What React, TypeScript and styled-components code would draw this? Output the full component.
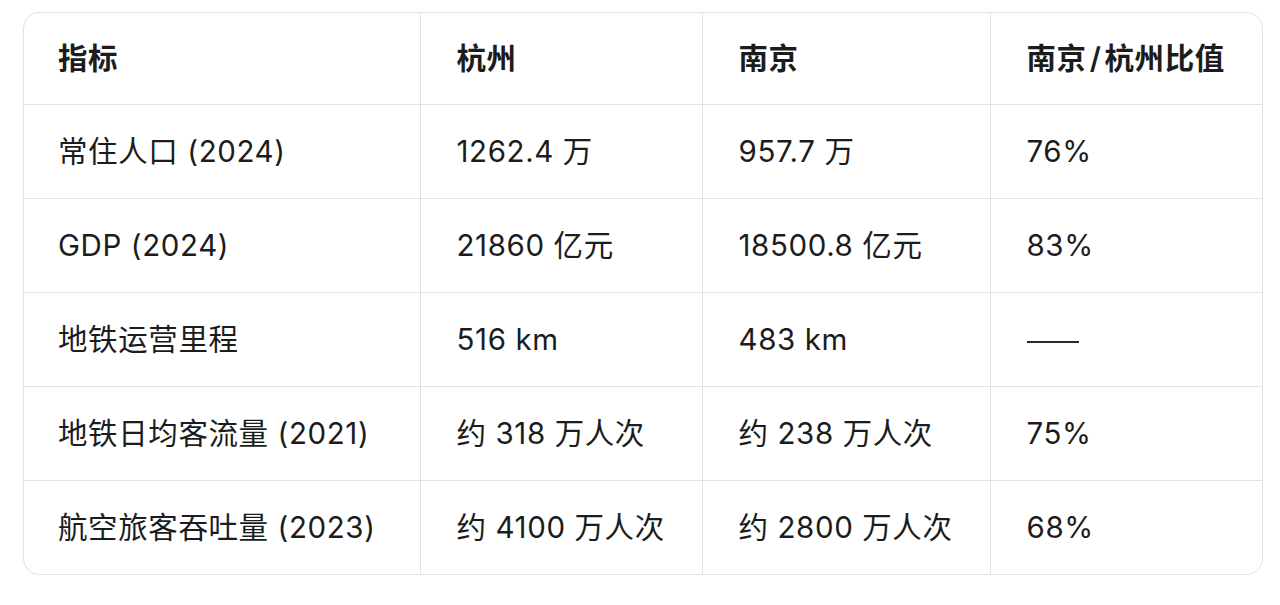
import React from "react";
import styled, { createGlobalStyle } from "styled-components";

const GlobalStyle = createGlobalStyle`
  html, body {
    margin: 0;
    padding: 0;
    background: #ffffff;
  }
  body {
    font-family: "Inter", "Noto Sans CJK SC", sans-serif;
    color: #1c1c1c;
  }
`;

const Page = styled.div`
  padding: 12px 19px 0 23px;
`;

const Frame = styled.div`
  width: 1238px;
  border: 1px solid #e2e2e2;
  border-radius: 16px;
  overflow: hidden;
`;

const Table = styled.table`
  width: 100%;
  border-collapse: collapse;
  table-layout: fixed;
`;

const Cell = styled.td<{ $head?: boolean }>`
  height: ${(p) => (p.$head ? "91px" : "93px")};
  padding: 0 0 0 34px;
  font-size: 29.5px;
  font-weight: ${(p) => (p.$head ? 600 : 400)};
  letter-spacing: 0.6px;
  text-align: left;
  line-height: 1;
  vertical-align: middle;
  white-space: nowrap;
  border-right: 1px solid #e2e2e2;
  border-bottom: 1px solid #e2e2e2;
  color: #1c1c1c;

  &:not(:first-child) {
    padding-left: 36px;
  }
  &:last-child {
    border-right: none;
  }
  tr:last-child > & {
    border-bottom: none;
  }
`;

const Slash = styled.span`
  margin: 0 3px;
`;

const Dash = styled.span`
  display: inline-block;
  width: 52px;
  height: 2px;
  background: #2a2a2a;
  vertical-align: middle;
`;

const rows: [string, string, string, string | null][] = [
  ["常住人口 (2024)", "1262.4 万", "957.7 万", "76%"],
  ["GDP (2024)", "21860 亿元", "18500.8 亿元", "83%"],
  ["地铁运营里程", "516 km", "483 km", null],
  ["地铁日均客流量 (2021)", "约 318 万人次", "约 238 万人次", "75%"],
  ["航空旅客吞吐量 (2023)", "约 4100 万人次", "约 2800 万人次", "68%"],
];

const App: React.FC = () => {
  return (
    <>
      <GlobalStyle />
      <Page>
        <Frame>
          <Table>
            <colgroup>
              <col style={{ width: 396 }} />
              <col style={{ width: 282 }} />
              <col style={{ width: 288 }} />
              <col />
            </colgroup>
            <tbody>
              <tr>
                <Cell as="th" $head>指标</Cell>
                <Cell as="th" $head>杭州</Cell>
                <Cell as="th" $head>南京</Cell>
                <Cell as="th" $head>
                  南京<Slash>/</Slash>杭州比值
                </Cell>
              </tr>
              {rows.map((r) => (
                <tr key={r[0]}>
                  <Cell>{r[0]}</Cell>
                  <Cell>{r[1]}</Cell>
                  <Cell>{r[2]}</Cell>
                  <Cell>{r[3] ?? <Dash />}</Cell>
                </tr>
              ))}
            </tbody>
          </Table>
        </Frame>
      </Page>
    </>
  );
};

export default App;
